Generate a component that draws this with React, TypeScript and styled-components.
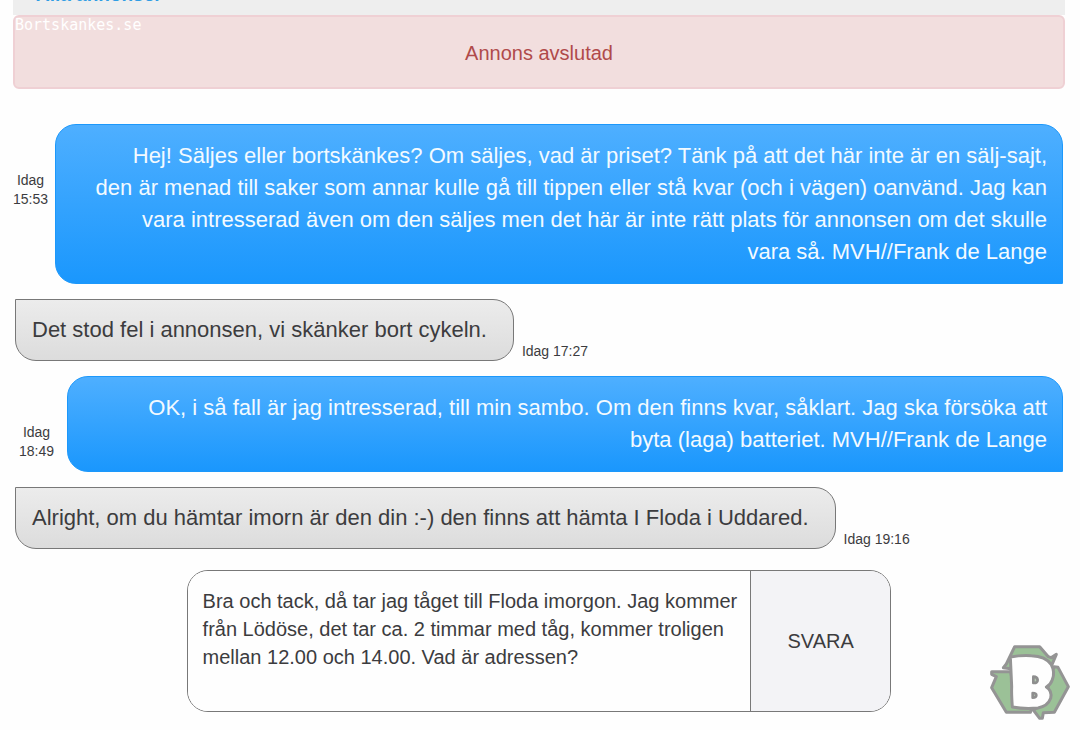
import React from "react";
import styled, { createGlobalStyle } from "styled-components";

const GlobalStyle = createGlobalStyle`
  *, *::before, *::after { box-sizing: border-box; }
  body {
    margin: 0;
    background: #fefefe;
    color: #3c3c3e;
    font-family: "Liberation Sans", Arial, sans-serif;
  }
`;

const Page = styled.div`
  padding: 0 15px 0 13px;
`;

const TopBar = styled.nav`
  display: flex;
  align-items: flex-end;
  height: 15px;
  padding: 0 23px 10px;
  background: #eeeeee;
  overflow: hidden;
`;

const TopLink = styled.a`
  color: #2f9de4;
  font-size: 19px;
  font-weight: bold;
  line-height: 20px;
  text-decoration: none;
`;

const Alert = styled.div`
  position: relative;
  padding: 23px 16px 21px;
  border: 2px solid #efd0d4;
  border-radius: 6px;
  background: #f2dede;
  color: #b04a4a;
  font-size: 20px;
  line-height: 26px;
  text-align: center;
`;

const Watermark = styled.span`
  position: absolute;
  top: 0;
  left: 0;
  color: #ffffff;
  font-family: "DejaVu Sans Mono", monospace;
  font-size: 15px;
  line-height: 17px;
`;

const Thread = styled.main`
  display: flex;
  flex-direction: column;
  gap: 15px;
  padding: 35px 2px 0 0;
`;

const SentRow = styled.article<{ $indent?: boolean }>`
  display: flex;
  align-items: flex-start;
  gap: ${(p) => (p.$indent ? "13px" : "7px")};
  padding-left: ${(p) => (p.$indent ? "6px" : "0")};
`;

const ReceivedRow = styled.article`
  display: flex;
  align-items: flex-end;
  gap: 8px;
  padding-left: 2px;
`;

const Bubble = styled.p`
  margin: 0;
  font-size: 22px;
  line-height: 32px;
`;

const SentBubble = styled(Bubble)`
  flex: 1;
  padding: 15px;
  border: 1px solid #1c98fb;
  border-radius: 21px 21px 0 21px;
  background: linear-gradient(#4eafff, #1a97fd);
  color: #f3faff;
  text-align: right;
`;

const ReceivedBubble = styled(Bubble)`
  padding: 14px 26px 14px 16px;
  border: 1px solid #787878;
  border-radius: 0 21px 21px 21px;
  background: linear-gradient(#ececec, #dcdcdc);
`;

const Time = styled.time`
  font-size: 14px;
  line-height: 19px;
`;

const SideTime = styled(Time)`
  width: 35px;
  padding-top: 47px;
  text-align: center;
`;

const ReplyForm = styled.form`
  display: flex;
  width: 67%;
  min-width: 480px;
  margin: 21px auto 0;
  border: 1px solid #787878;
  border-radius: 21px;
  overflow: hidden;
`;

const ReplyBox = styled.textarea`
  flex: 1;
  min-width: 0;
  height: 140px;
  padding: 16px 12px 16px 15px;
  border: 0;
  outline: 0;
  resize: none;
  background: #fefefe;
  color: inherit;
  font-family: inherit;
  font-size: 20px;
  line-height: 28px;
`;

const ReplyButton = styled.button`
  width: 20%;
  border: 0;
  border-left: 1px solid #787878;
  background: #f3f3f6;
  color: inherit;
  font-family: inherit;
  font-size: 20px;
`;

const Badge = styled.a`
  position: fixed;
  right: 10px;
  bottom: 10px;
  width: 80px;
  height: 75px;
`;

function RecycleLogo() {
  return (
    <svg width="80" height="75" viewBox="30 27 240 225" aria-hidden="true">
      <g fill="#9bc197" stroke="#949494" strokeWidth="9" strokeLinejoin="round">
        <path d="M104 32H179L205 62L213 65L229 55L215 88L196 96L92 98L70 95L79 84Z" />
        <path d="M35 107H92L112 212H158L151 229H79L35 155L49 122L35 115Z" />
        <path d="M216 108L222 92L234 94L265 152L223 229L190 230L187 247H179L160 222L190 206Z" />
      </g>
      <path
        d="M91 63Q123 57 154 59Q197 60 214 86Q226 108 217 131Q212 146 199 153Q217 164 212 187Q203 211 174 216Q134 220 97 213Q94 174 95 151Z"
        fill="#fefefe"
        stroke="#949494"
        strokeWidth="9"
        strokeLinejoin="round"
      />
      <g fill="#b4c9b2" stroke="#8e8e8e" strokeWidth="8" strokeLinejoin="round">
        <path d="M160 122V141Q173 142 173 132Q172 122 160 122Z" />
        <path d="M158 171V185Q169 185 169 178Q169 171 158 171Z" />
      </g>
    </svg>
  );
}

export default function App() {
  return (
    <>
      <GlobalStyle />
      <Page>
        <TopBar>
          <TopLink href="#annonser">Alla annonser</TopLink>
        </TopBar>
        <Alert role="status">
          <Watermark>Bortskankes.se</Watermark>
          Annons avslutad
        </Alert>
        <Thread>
          <SentRow>
            <SideTime>Idag 15:53</SideTime>
            <SentBubble>
              Hej! Säljes eller bortskänkes? Om säljes, vad är priset? Tänk på att det här inte är en
              sälj-sajt,
              <br />
              den är menad till saker som annar kulle gå till tippen eller stå kvar (och i vägen)
              oanvänd. Jag kan
              <br />
              vara intresserad även om den säljes men det här är inte rätt plats för annonsen om det
              skulle
              <br />
              vara så. MVH//Frank de Lange
            </SentBubble>
          </SentRow>
          <ReceivedRow>
            <ReceivedBubble>Det stod fel i annonsen, vi skänker bort cykeln.</ReceivedBubble>
            <Time>Idag 17:27</Time>
          </ReceivedRow>
          <SentRow $indent>
            <SideTime>Idag 18:49</SideTime>
            <SentBubble>
              OK, i så fall är jag intresserad, till min sambo. Om den finns kvar, såklart. Jag ska
              försöka att
              <br />
              byta (laga) batteriet. MVH//Frank de Lange
            </SentBubble>
          </SentRow>
          <ReceivedRow>
            <ReceivedBubble>
              Alright, om du hämtar imorn är den din :-) den finns att hämta I Floda i Uddared.
            </ReceivedBubble>
            <Time>Idag 19:16</Time>
          </ReceivedRow>
        </Thread>
        <ReplyForm onSubmit={(e: React.FormEvent) => e.preventDefault()}>
          <ReplyBox
            aria-label="Svar"
            defaultValue="Bra och tack, då tar jag tåget till Floda imorgon. Jag kommer från Lödöse, det tar ca. 2 timmar med tåg, kommer troligen mellan 12.00 och 14.00. Vad är adressen?"
          />
          <ReplyButton type="submit">SVARA</ReplyButton>
        </ReplyForm>
      </Page>
      <Badge href="#hem" aria-label="Bortskänkes">
        <RecycleLogo />
      </Badge>
    </>
  );
}
